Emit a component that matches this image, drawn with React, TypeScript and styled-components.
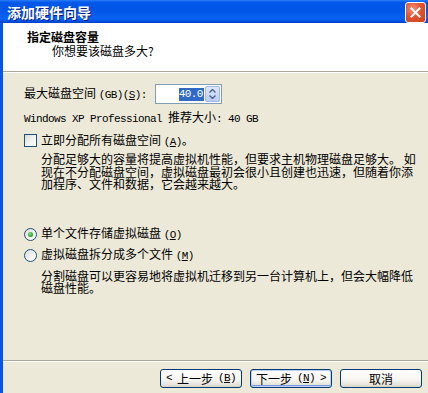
import React from "react";
import styled, { createGlobalStyle } from "styled-components";

const Global = createGlobalStyle`
  html, body { margin: 0; padding: 0; background: #ece9d8; }
  body { font-family: "Noto Sans CJK SC", "Noto Sans", sans-serif; font-size: 12px; color: #000; }
  * { box-sizing: border-box; }
`;

const Window = styled.div`
  width: 428px;
  height: 393px;
  display: flex;
  flex-direction: column;
  overflow: hidden;
  background: #ece9d8;
`;

const TitleBar = styled.div`
  height: 23px;
  flex: none;
  display: flex;
  align-items: center;
  justify-content: space-between;
  padding: 0 2px 0 7px;
  background: linear-gradient(
    to bottom,
    #2a7cf6 0%,
    #0559ea 10%,
    #0055e6 45%,
    #0a62f2 80%,
    #0658ec 90%,
    #0044cf 96%,
    #0040c4 100%
  );
`;

const TitleText = styled.span`
  color: #fff;
  font-weight: bold;
  font-size: 14px;
  line-height: 16px;
  text-shadow: 1px 1px 0 #0a1f87;
`;

const CloseButton = styled.div`
  width: 21px;
  height: 21px;
  border: 1px solid #fff;
  border-radius: 3px;
  background: radial-gradient(circle at 35% 30%, #f0917a 0%, #e2542f 45%, #c8431d 100%);
  display: flex;
  align-items: center;
  justify-content: center;
  margin-top: 1px;
`;

const Client = styled.div`
  flex: 1;
  display: flex;
  flex-direction: column;
  border-left: 3px solid #0a55e0;
  min-height: 0;
`;

const Header = styled.div`
  height: 49px;
  flex: none;
  background: #fff;
  padding: 7px 0 0 24px;
  border-bottom: 1px solid #aca899;
  box-shadow: 0 1px 0 #fff;
  margin-bottom: 1px;
`;

const HeaderTitle = styled.div`
  font-weight: bold;
  line-height: 13px;
`;

const HeaderSub = styled.div`
  line-height: 13px;
  margin-top: 1px;
  padding-left: 25px;
`;

const Body = styled.div`
  flex: 1;
  padding: 11px 0 0 21px;
  min-height: 0;
`;

const FieldRow = styled.div`
  display: flex;
  align-items: center;
  height: 20px;
`;

const Label = styled.span`
  line-height: 13px;
  white-space: nowrap;
`;

const L = styled.span`
  font-family: "Liberation Mono", monospace;
  font-size: 11px;
  letter-spacing: -0.6px;
`;

const SpinBox = styled.div`
  width: 67px;
  height: 20px;
  margin-left: 8px;
  border: 1px solid #7f9db9;
  background: #fff;
  display: flex;
  align-items: center;
  justify-content: flex-end;
  padding-right: 1px;
`;

const Selected = styled.span`
  background: #316ac5;
  color: #fff;
  font-family: "Liberation Mono", monospace;
  font-size: 11px;
  letter-spacing: -0.6px;
  line-height: 13px;
  padding: 0 1px 0 0;
  margin-right: 1px;
`;

const SpinButton = styled.div`
  width: 15px;
  height: 16px;
  background: linear-gradient(to bottom, #dde8fe, #b9cdf8);
  border: 1px solid #9db6ee;
  border-radius: 2px;
  display: flex;
  flex-direction: column;
  align-items: center;
  justify-content: center;
  gap: 2px;
`;

const InfoLine = styled.div`
  margin-top: 6px;
  line-height: 13px;
  white-space: nowrap;
`;

const OptionRow = styled.div<{ $top: number }>`
  display: flex;
  align-items: center;
  height: 13px;
  margin-top: ${(p) => p.$top}px;
  gap: 4px;
  white-space: nowrap;
  line-height: 13px;
`;

const CheckBox = styled.div`
  width: 13px;
  height: 13px;
  border: 1px solid #1c5180;
  background: linear-gradient(135deg, #dcdcd7 0%, #f4f4f0 60%, #ffffff 100%);
  flex: none;
`;

const Radio = styled.div<{ $checked?: boolean }>`
  width: 13px;
  height: 13px;
  border-radius: 50%;
  border: 1px solid #1c5180;
  background: linear-gradient(135deg, #dcdcd7 0%, #f4f4f0 60%, #ffffff 100%);
  flex: none;
  display: flex;
  align-items: center;
  justify-content: center;
  &::after {
    content: "";
    display: ${(p) => (p.$checked ? "block" : "none")};
    width: 5px;
    height: 5px;
    border-radius: 50%;
    background: radial-gradient(circle at 40% 35%, #8fe08f 0%, #28a828 60%, #1a8a1a 100%);
  }
`;

const Paragraph = styled.p<{ $top: number }>`
  margin: ${(p) => p.$top}px 0 0;
  padding-left: 17px;
  line-height: 12.5px;
  white-space: nowrap;
`;

const Footer = styled.div`
  height: 33px;
  flex: none;
  border-top: 1px solid #aca899;
  box-shadow: inset 0 1px 0 #fff;
  display: flex;
  justify-content: flex-end;
  align-items: flex-start;
  gap: 8px;
  padding: 8px 6px 0 0;
`;

const Button = styled.div<{ $default?: boolean }>`
  width: 82px;
  height: 19px;
  border: 1px solid #003c74;
  border-radius: 3px;
  background: linear-gradient(to bottom, #ffffff 0%, #f5f4ef 60%, #e3e0d6 90%, #d6d0c5 100%);
  box-shadow: ${(p) =>
    p.$default ? "inset 0 0 0 1px #b9d1f7, inset 0 -1px 0 1px #7d9de8" : "none"};
  display: flex;
  align-items: center;
  justify-content: center;
  gap: 5px;
  line-height: 13px;
  white-space: nowrap;
`;

const Key = styled.u`
  text-underline-offset: 1px;
`;

const Up = () => (
  <svg width="7" height="4" viewBox="0 0 7 4">
    <path d="M0.5 3.5 L3.5 0.5 L6.5 3.5" stroke="#4d6185" strokeWidth="1.4" fill="none" />
  </svg>
);

const Down = () => (
  <svg width="7" height="4" viewBox="0 0 7 4">
    <path d="M0.5 0.5 L3.5 3.5 L6.5 0.5" stroke="#4d6185" strokeWidth="1.4" fill="none" />
  </svg>
);

export default function App() {
  return (
    <>
      <Global />
      <Window>
        <TitleBar>
          <TitleText>添加硬件向导</TitleText>
          <CloseButton>
            <svg width="11" height="11" viewBox="0 0 11 11">
              <path d="M1.5 1.5 L9.5 9.5 M9.5 1.5 L1.5 9.5" stroke="#fff" strokeWidth="2" strokeLinecap="square" />
            </svg>
          </CloseButton>
        </TitleBar>
        <Client>
          <Header>
            <HeaderTitle>指定磁盘容量</HeaderTitle>
            <HeaderSub>你想要该磁盘多大?</HeaderSub>
          </Header>
          <Body>
            <FieldRow>
              <Label>
                最大磁盘空间 <L>(GB)(<Key>S</Key>):</L>
              </Label>
              <SpinBox>
                <Selected>40.0</Selected>
                <SpinButton>
                  <Up />
                  <Down />
                </SpinButton>
              </SpinBox>
            </FieldRow>
            <InfoLine>
              <L>Windows XP Professional </L>推荐大小<L>: 40 GB</L>
            </InfoLine>
            <OptionRow $top={8}>
              <CheckBox />
              <span>
                立即分配所有磁盘空间 <L>(<Key>A</Key>)</L>。
              </span>
            </OptionRow>
            <Paragraph $top={6}>
              {"分配足够大的容量将提高虚拟机性能，但要求主机物理磁盘足够大。 如"}
              <br />
              {"现在不分配磁盘空间，虚拟磁盘最初会很小且创建也迅速，但随着你添"}
              <br />
              {"加程序、文件和数据，它会越来越大。"}
            </Paragraph>
            <OptionRow $top={37}>
              <Radio $checked />
              <span>
                单个文件存储虚拟磁盘 <L>(<Key>O</Key>)</L>
              </span>
            </OptionRow>
            <OptionRow $top={8}>
              <Radio />
              <span>
                虚拟磁盘拆分成多个文件 <L>(<Key>M</Key>)</L>
              </span>
            </OptionRow>
            <Paragraph $top={8}>
              {"分割磁盘可以更容易地将虚拟机迁移到另一台计算机上，但会大幅降低"}
              <br />
              {"磁盘性能。"}
            </Paragraph>
          </Body>
          <Footer>
            <Button>
              <L>&lt;</L>
              <span>上一步</span>
              <L>(<Key>B</Key>)</L>
            </Button>
            <Button $default>
              <span>下一步</span>
              <L>(<Key>N</Key>)</L>
              <L>&gt;</L>
            </Button>
            <Button>取消</Button>
          </Footer>
        </Client>
      </Window>
    </>
  );
}
